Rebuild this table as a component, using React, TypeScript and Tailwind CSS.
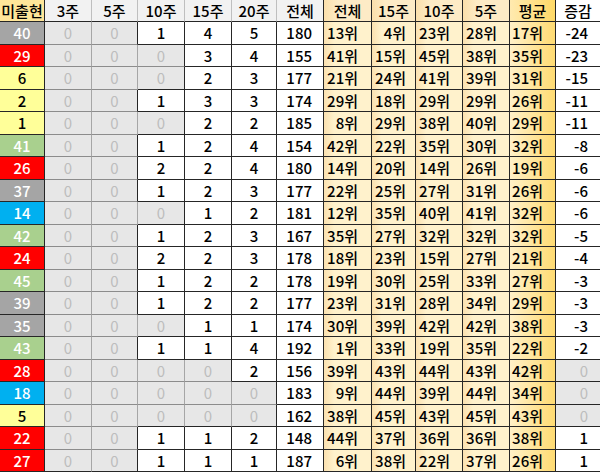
import React from 'react';

type Row = {
    no: number;
    color: 'gray' | 'red' | 'yellow' | 'green' | 'blue';
    hits: number[];
    total: number;
    ranks: number[];
    avg: number;
    diff: number;
};

const rows: Row[] = [
    { no: 40, color: 'gray', hits: [0, 0, 1, 4, 5], total: 180, ranks: [13, 4, 23, 28], avg: 17, diff: -24 },
    { no: 29, color: 'red', hits: [0, 0, 0, 3, 4], total: 155, ranks: [41, 15, 45, 38], avg: 35, diff: -23 },
    { no: 6, color: 'yellow', hits: [0, 0, 0, 2, 3], total: 177, ranks: [21, 24, 41, 39], avg: 31, diff: -15 },
    { no: 2, color: 'yellow', hits: [0, 0, 1, 3, 3], total: 174, ranks: [29, 18, 29, 29], avg: 26, diff: -11 },
    { no: 1, color: 'yellow', hits: [0, 0, 0, 2, 2], total: 185, ranks: [8, 29, 38, 40], avg: 29, diff: -11 },
    { no: 41, color: 'green', hits: [0, 0, 1, 2, 4], total: 154, ranks: [42, 22, 35, 30], avg: 32, diff: -8 },
    { no: 26, color: 'red', hits: [0, 0, 2, 2, 4], total: 180, ranks: [14, 20, 14, 26], avg: 19, diff: -6 },
    { no: 37, color: 'gray', hits: [0, 0, 1, 2, 3], total: 177, ranks: [22, 25, 27, 31], avg: 26, diff: -6 },
    { no: 14, color: 'blue', hits: [0, 0, 0, 1, 2], total: 181, ranks: [12, 35, 40, 41], avg: 32, diff: -6 },
    { no: 42, color: 'green', hits: [0, 0, 1, 2, 3], total: 167, ranks: [35, 27, 32, 32], avg: 32, diff: -5 },
    { no: 24, color: 'red', hits: [0, 0, 2, 2, 3], total: 178, ranks: [18, 23, 15, 27], avg: 21, diff: -4 },
    { no: 45, color: 'green', hits: [0, 0, 1, 2, 2], total: 178, ranks: [19, 30, 25, 33], avg: 27, diff: -3 },
    { no: 39, color: 'gray', hits: [0, 0, 1, 2, 2], total: 177, ranks: [23, 31, 28, 34], avg: 29, diff: -3 },
    { no: 35, color: 'gray', hits: [0, 0, 0, 1, 1], total: 174, ranks: [30, 39, 42, 42], avg: 38, diff: -3 },
    { no: 43, color: 'green', hits: [0, 0, 1, 1, 4], total: 192, ranks: [1, 33, 19, 35], avg: 22, diff: -2 },
    { no: 28, color: 'red', hits: [0, 0, 0, 0, 2], total: 156, ranks: [39, 43, 44, 43], avg: 42, diff: 0 },
    { no: 18, color: 'blue', hits: [0, 0, 0, 0, 0], total: 183, ranks: [9, 44, 39, 44], avg: 34, diff: 0 },
    { no: 5, color: 'yellow', hits: [0, 0, 0, 0, 0], total: 162, ranks: [38, 45, 43, 45], avg: 43, diff: 0 },
    { no: 22, color: 'red', hits: [0, 0, 1, 1, 2], total: 148, ranks: [44, 37, 36, 36], avg: 38, diff: 1 },
    { no: 27, color: 'red', hits: [0, 0, 1, 1, 1], total: 187, ranks: [6, 38, 22, 37], avg: 26, diff: 1 },
];

const ballClass = {
    gray: 'bg-[#a5a5a5] text-white',
    red: 'bg-[#ff0000] text-white',
    yellow: 'bg-[#ffff99] text-black',
    green: 'bg-[#a9d08e] text-white',
    blue: 'bg-[#00b0f0] text-white',
};

const dark = 'border-[#262626]';
const rankBg = 'bg-[linear-gradient(to_right,#fbe1b0,#fff2cc_22%)]';
const avgBg = 'bg-[linear-gradient(to_right,#fff1c8,#ffdb72)]';

function HeadCell({ children, className }: { children: React.ReactNode; className: string }) {
    return (
        <div className={`flex items-center justify-center border-b border-r text-[15px] font-medium text-black ${className}`}>
            {children}
        </div>
    );
}

export default function App() {
    return (
        <div
            className="grid h-[472px] w-[600px] overflow-hidden bg-white grid-cols-[45px_47px_46px_47px_47px_45px_47px_48px_44px_47px_47px_46px_44px] grid-rows-[22px_repeat(20,22.5px)] leading-none"
            style={{ fontFamily: '"Noto Sans CJK KR", "Noto Sans", sans-serif' }}
        >
            <HeadCell className={`bg-[#ffe699] ${dark}`}>미출현</HeadCell>
            <HeadCell className={`bg-[#f2f2f2] border-r-[#bfbfbf] border-b-[#262626]`}>3주</HeadCell>
            <HeadCell className={`bg-[#f2f2f2] border-r-[#bfbfbf] border-b-[#262626]`}>5주</HeadCell>
            <HeadCell className={`bg-[#f2f2f2] border-r-[#bfbfbf] border-b-[#262626]`}>10주</HeadCell>
            <HeadCell className={`bg-[#f2f2f2] border-r-[#bfbfbf] border-b-[#262626]`}>15주</HeadCell>
            <HeadCell className={`bg-[#f2f2f2] border-r-[#bfbfbf] border-b-[#262626]`}>20주</HeadCell>
            <HeadCell className={`bg-[#f2f2f2] ${dark}`}>전체</HeadCell>
            <HeadCell className={`bg-[linear-gradient(to_right,#fbdfab,#fdebc6_30%)] ${dark}`}>전체</HeadCell>
            <HeadCell className={`bg-[linear-gradient(to_right,#fbdfab,#fdebc6_30%)] ${dark}`}>15주</HeadCell>
            <HeadCell className={`bg-[linear-gradient(to_right,#fbdfab,#fdebc6_30%)] ${dark}`}>10주</HeadCell>
            <HeadCell className={`bg-[linear-gradient(to_right,#fbdfab,#fdebc6_30%)] ${dark}`}>5주</HeadCell>
            <HeadCell className={`bg-[linear-gradient(to_right,#ffeab0,#ffd966)] ${dark}`}>평균</HeadCell>
            <HeadCell className={`bg-white ${dark} border-r-0`}>증감</HeadCell>

            {rows.map((row, ri) => {
                const next = rows[ri + 1];
                return (
                    <React.Fragment key={row.no}>
                        <div className={`flex items-center justify-center border-b border-r ${dark} text-[15px] font-medium ${ballClass[row.color]}`}>
                            {row.no}
                        </div>
                        {row.hits.map((h, hi) => {
                            const zero = h === 0;
                            const rightZero = zero && hi < 4 && row.hits[hi + 1] === 0;
                            const belowZero = zero && next && next.hits[hi] === 0;
                            return (
                                <div
                                    key={hi}
                                    className={`flex items-center justify-center border-b border-r text-[15px] ${
                                        zero ? 'bg-[#e7e7e7] text-[#bdbdbd] font-normal' : 'bg-white text-black font-medium'
                                    } ${rightZero ? 'border-r-[#a6a6a6]' : 'border-r-[#262626]'} ${
                                        belowZero ? 'border-b-[#8c8c8c]' : 'border-b-[#262626]'
                                    }`}
                                >
                                    {h}
                                </div>
                            );
                        })}
                        <div className={`flex items-center justify-end border-b border-r ${dark} bg-white pr-[11px] text-[15px] font-medium text-black`}>
                            {row.total}
                        </div>
                        {row.ranks.map((r, k) => (
                            <div key={k} className={`flex items-center border-b border-r ${dark} ${rankBg} pl-[3px] text-[15px] font-medium text-black`}>
                                <span className="w-[31px] text-right">{r}위</span>
                            </div>
                        ))}
                        <div className={`flex items-center border-b border-r ${dark} ${avgBg} pl-[2px] text-[15px] font-medium text-black`}>
                            <span className="w-[31px] text-right">{row.avg}위</span>
                        </div>
                        <div
                            className={`flex items-center justify-end border-b ${dark} pr-[12px] text-[15px] ${
                                row.diff === 0 ? 'bg-[#e7e7e7] text-[#bdbdbd] font-normal' : 'bg-white text-black font-medium'
                            }`}
                        >
                            {row.diff}
                        </div>
                    </React.Fragment>
                );
            })}
        </div>
    );
}
